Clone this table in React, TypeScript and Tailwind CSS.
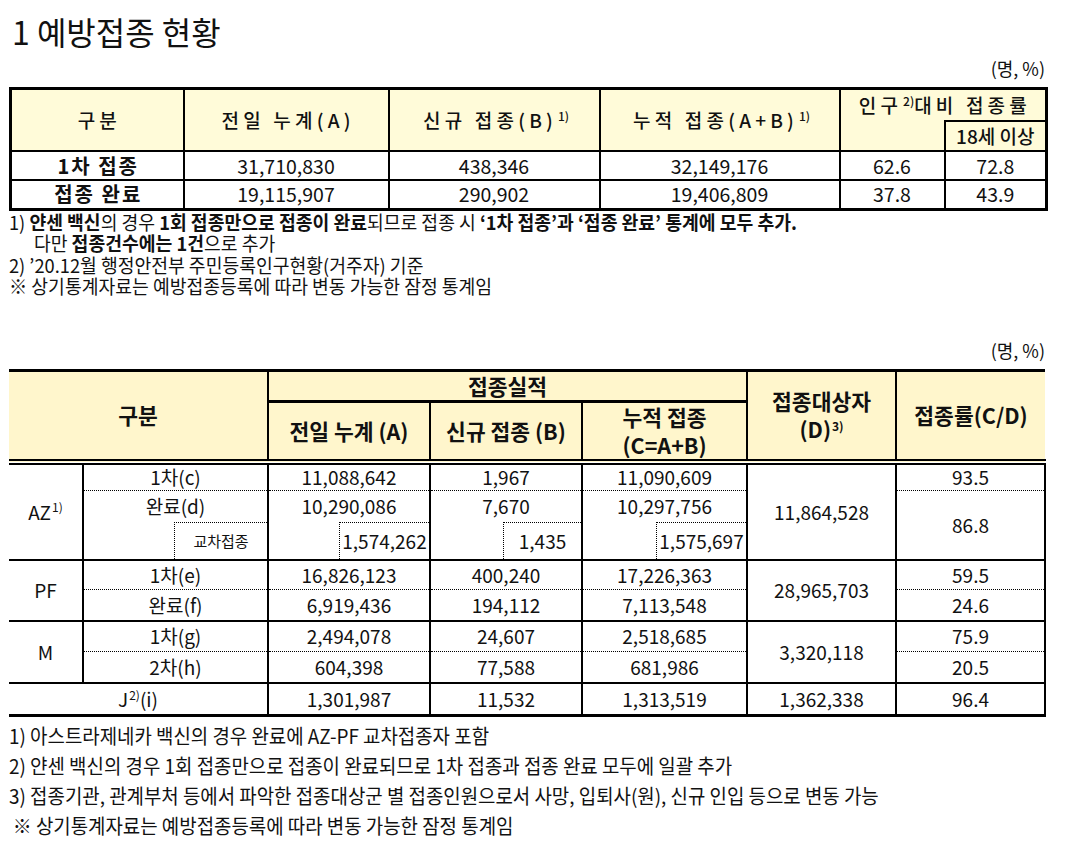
const SUMMARY = [
  { label: "1차 접종", prev: "31,710,830", added: "438,346", total: "32,149,176", pop: "62.6", adult: "72.8" },
  { label: "접종 완료", prev: "19,115,907", added: "290,902", total: "19,406,809", pop: "37.8", adult: "43.9" },
];

const DETAIL_NOTES = [
  "1) 아스트라제네카 백신의 경우 완료에 AZ-PF 교차접종자 포함",
  "2) 얀센 백신의 경우 1회 접종만으로 접종이 완료되므로 1차 접종과 접종 완료 모두에 일괄 추가",
  "3) 접종기관, 관계부처 등에서 파악한 접종대상군 별 접종인원으로서 사망, 입퇴사(원), 신규 인입 등으로 변동 가능",
];

const th1 = "border-2 border-black text-[19px] font-medium tracking-[0.22em] pl-[0.22em]";
const td1 = "border-2 border-black text-center text-[19.5px] leading-[24px]";

const th2 = "border-black border-t-[3px] border-b-[6px] [border-bottom-style:double] text-[21.5px] font-bold leading-[28px]";
const cell = "border-black border-r-2 text-center text-[19px] leading-[24px]";
const dot = "border-b [border-bottom-style:dotted]";

function Sup({ children }: { children: React.ReactNode }) {
  return <sup className="text-[12px] top-[-0.6em] ml-[1px] tracking-normal">{children}</sup>;
}

function CrossBox({ w, size = "text-[19px]", children }: { w: string; size?: string; children: React.ReactNode }) {
  return (
    <div className={`ml-auto flex h-[37px] items-center justify-center border-l border-t border-dotted border-black ${w} ${size}`}>
      {children}
    </div>
  );
}

function SummaryTable() {
  return (
    <table className="mt-[8px] w-[1036px] table-fixed border-collapse border-[3px] border-black">
      <colgroup>
        <col className="w-[173px]" />
        <col className="w-[205px]" />
        <col className="w-[211px]" />
        <col className="w-[240px]" />
        <col className="w-[105px]" />
        <col className="w-[102px]" />
      </colgroup>
      <thead className="bg-[#fffbd9]">
        <tr className="h-[32px]">
          <th rowSpan={2} className={th1}>구분</th>
          <th rowSpan={2} className={th1}>전일 누계(A)</th>
          <th rowSpan={2} className={th1}>
            신규 접종(B)<Sup>1)</Sup>
          </th>
          <th rowSpan={2} className={th1}>
            누적 접종(A+B)<Sup>1)</Sup>
          </th>
          <th colSpan={2} className={`${th1} border-b-0 align-top pt-[1px]`}>
            인구<Sup>2)</Sup>대비 접종률
          </th>
        </tr>
        <tr className="h-[29px]">
          <td className="border-0 border-l-2 border-black" />
          <th className="border-2 border-black text-[19px] font-medium">18세 이상</th>
        </tr>
      </thead>
      <tbody>
        {SUMMARY.map((r) => (
          <tr key={r.label} className="h-[29px]">
            <th className="border-2 border-black text-[20px] font-bold tracking-[0.1em] pl-[0.1em] leading-[24px]">
              {r.label}
            </th>
            <td className={td1}>{r.prev}</td>
            <td className={td1}>{r.added}</td>
            <td className={td1}>{r.total}</td>
            <td className={td1}>{r.pop}</td>
            <td className={td1}>{r.adult}</td>
          </tr>
        ))}
      </tbody>
    </table>
  );
}

const note1 = "h-[21.5px] origin-left scale-x-[0.96] whitespace-nowrap";

function SummaryNotes() {
  return (
    <div className="text-[19px] leading-[21.5px]">
      <div className={note1}>
        1) <b>얀센 백신</b>의 경우 <b>1회 접종만으로 접종이 완료</b>되므로 접종 시{" "}
        <b>‘1차 접종’과 ‘접종 완료’ 통계에 모두 추가.</b>
      </div>
      <div className={`${note1} pl-[26px]`}>
        다만 <b>접종건수에는 1건</b>으로 추가
      </div>
      <div className={note1}>2) ’20.12월 행정안전부 주민등록인구현황(거주자) 기준</div>
      <div className={note1}>※ 상기통계자료는 예방접종등록에 따라 변동 가능한 잠정 통계임</div>
    </div>
  );
}

function DetailTable() {
  return (
    <table className="mt-[8px] w-[1036px] table-fixed border-collapse">
      <colgroup>
        <col className="w-[74px]" />
        <col className="w-[185px]" />
        <col className="w-[162px]" />
        <col className="w-[152px]" />
        <col className="w-[165px]" />
        <col className="w-[149px]" />
        <col className="w-[149px]" />
      </colgroup>
      <thead className="bg-[#fff6cc]">
        <tr className="h-[31px]">
          <th colSpan={2} rowSpan={2} className={`${th2} border-r-2`}>구분</th>
          <th colSpan={3} className="border-black border-t-[3px] border-r-2 border-b text-[21.5px] font-bold leading-[28px]">
            접종실적
          </th>
          <th rowSpan={2} className={`${th2} border-r-2`}>
            접종대상자
            <br />
            (D)<Sup>3)</Sup>
          </th>
          <th rowSpan={2} className={th2}>접종률(C/D)</th>
        </tr>
        <tr className="h-[60px]">
          <th className={`${th2} border-t border-r-2`}>전일 누계 (A)</th>
          <th className={`${th2} border-t border-r-2`}>신규 접종 (B)</th>
          <th className={`${th2} border-t border-r-2`}>
            누적 접종
            <br />
            (C=A+B)
          </th>
        </tr>
      </thead>
      <tbody>
        <tr className="h-[29px]">
          <td rowSpan={3} className={`${cell} border-b-2`}>
            AZ<Sup>1)</Sup>
          </td>
          <td className={`${cell} ${dot}`}>1차(c)</td>
          <td className={`${cell} ${dot}`}>11,088,642</td>
          <td className={`${cell} ${dot}`}>1,967</td>
          <td className={`${cell} ${dot}`}>11,090,609</td>
          <td rowSpan={3} className={`${cell} border-b-2`}>11,864,528</td>
          <td className={`${cell} border-r-0 ${dot}`}>93.5</td>
        </tr>
        <tr className="h-[31px]">
          <td className={cell}>완료(d)</td>
          <td className={cell}>10,290,086</td>
          <td className={cell}>7,670</td>
          <td className={cell}>10,297,756</td>
          <td rowSpan={2} className={`${cell} border-r-0 border-b-2`}>86.8</td>
        </tr>
        <tr className="h-[38px]">
          <td className={`${cell} border-b-2 p-0 align-top`}>
            <CrossBox w="w-[93px]" size="text-[15px]">교차접종</CrossBox>
          </td>
          <td className={`${cell} border-b-2 p-0 align-top`}>
            <CrossBox w="w-[90px]">1,574,262</CrossBox>
          </td>
          <td className={`${cell} border-b-2 p-0 align-top`}>
            <CrossBox w="w-[78px]">1,435</CrossBox>
          </td>
          <td className={`${cell} border-b-2 p-0 align-top`}>
            <CrossBox w="w-[90px]">1,575,697</CrossBox>
          </td>
        </tr>

        <tr className="h-[30px]">
          <td rowSpan={2} className={`${cell} border-b-2`}>PF</td>
          <td className={`${cell} ${dot}`}>1차(e)</td>
          <td className={`${cell} ${dot}`}>16,826,123</td>
          <td className={`${cell} ${dot}`}>400,240</td>
          <td className={`${cell} ${dot}`}>17,226,363</td>
          <td rowSpan={2} className={`${cell} border-b-2`}>28,965,703</td>
          <td className={`${cell} border-r-0 ${dot}`}>59.5</td>
        </tr>
        <tr className="h-[31px]">
          <td className={`${cell} border-b-2`}>완료(f)</td>
          <td className={`${cell} border-b-2`}>6,919,436</td>
          <td className={`${cell} border-b-2`}>194,112</td>
          <td className={`${cell} border-b-2`}>7,113,548</td>
          <td className={`${cell} border-r-0 border-b-2`}>24.6</td>
        </tr>

        <tr className="h-[31px]">
          <td rowSpan={2} className={`${cell} border-b-2`}>M</td>
          <td className={`${cell} ${dot}`}>1차(g)</td>
          <td className={`${cell} ${dot}`}>2,494,078</td>
          <td className={`${cell} ${dot}`}>24,607</td>
          <td className={`${cell} ${dot}`}>2,518,685</td>
          <td rowSpan={2} className={`${cell} border-b-2`}>3,320,118</td>
          <td className={`${cell} border-r-0 ${dot}`}>75.9</td>
        </tr>
        <tr className="h-[31px]">
          <td className={`${cell} border-b-2`}>2차(h)</td>
          <td className={`${cell} border-b-2`}>604,398</td>
          <td className={`${cell} border-b-2`}>77,588</td>
          <td className={`${cell} border-b-2`}>681,986</td>
          <td className={`${cell} border-r-0 border-b-2`}>20.5</td>
        </tr>

        <tr className="h-[33px]">
          <td colSpan={2} className={`${cell} border-b-[3px]`}>
            J<Sup>2)</Sup>(i)
          </td>
          <td className={`${cell} border-b-[3px]`}>1,301,987</td>
          <td className={`${cell} border-b-[3px]`}>11,532</td>
          <td className={`${cell} border-b-[3px]`}>1,313,519</td>
          <td className={`${cell} border-b-[3px]`}>1,362,338</td>
          <td className={`${cell} border-r-0 border-b-[3px]`}>96.4</td>
        </tr>
      </tbody>
    </table>
  );
}

const note2 = "h-[30px] origin-left scale-x-[0.945] whitespace-nowrap";

export default function App() {
  return (
    <div className="h-[850px] w-[1080px] overflow-hidden bg-white pl-[9px] pr-[35px] font-['Noto_Sans_CJK_KR','Noto_Sans',sans-serif] text-[#111]">
      <h1 className="pl-[3px] pt-[11px] text-[32px] font-normal leading-[40px]">1 예방접종 현황</h1>
      <div className="mt-[6px] text-right text-[18px] leading-[22px]">(명, %)</div>
      <SummaryTable />
      <SummaryNotes />
      <div className="mt-[42px] text-right text-[18px] leading-[22px]">(명, %)</div>
      <DetailTable />
      <div className="mt-[4px] text-[20px] leading-[30px]">
        {DETAIL_NOTES.map((n) => (
          <div key={n} className={note2}>
            {n}
          </div>
        ))}
        <div className={`${note2} pl-[4px]`}>※ 상기통계자료는 예방접종등록에 따라 변동 가능한 잠정 통계임</div>
      </div>
    </div>
  );
}
